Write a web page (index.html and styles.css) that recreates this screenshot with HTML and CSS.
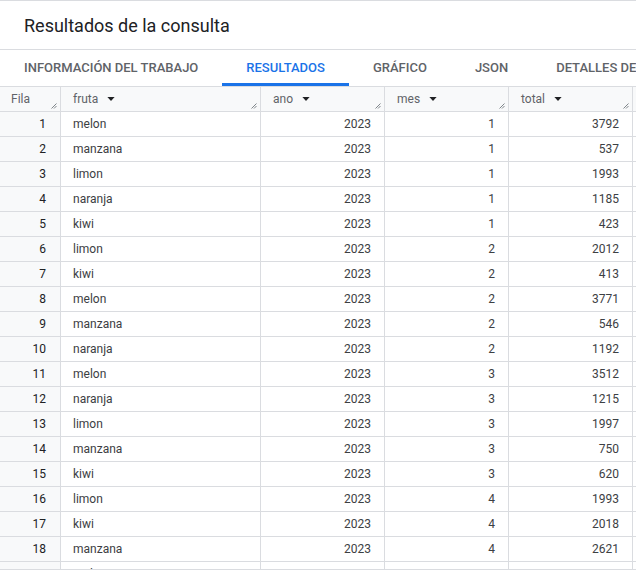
FILE: index.html
```html
<!DOCTYPE html>
<html lang="es">
<head>
<meta charset="utf-8">
<title>Resultados de la consulta</title>
<link rel="stylesheet" href="styles.css">
</head>
<body>
<div class="page">
  <header class="title-bar"><h1 class="title">Resultados de la consulta</h1></header>
  <nav class="tabs">
    <div class="tab">INFORMACIÓN DEL TRABAJO</div>
    <div class="tab active">RESULTADOS</div>
    <div class="tab">GRÁFICO</div>
    <div class="tab">JSON</div>
    <div class="tab">DETALLES DE LA EJECUCIÓN</div>
  </nav>
  <div class="grid-wrap">
    <div class="grid" id="grid">
      <div class="hc rn">Fila<svg class="rz" viewBox="0 0 6 6"><path d="M0.5 5.5 L5.5 0.5 M3 5.5 L5.5 3"/></svg></div>
      <div class="hc">fruta<svg class="sort" viewBox="0 0 9 5"><path d="M0 0 H9 L4.5 5 Z"/></svg><svg class="rz" viewBox="0 0 6 6"><path d="M0.5 5.5 L5.5 0.5 M3 5.5 L5.5 3"/></svg></div>
      <div class="hc">ano<svg class="sort" viewBox="0 0 9 5"><path d="M0 0 H9 L4.5 5 Z"/></svg><svg class="rz" viewBox="0 0 6 6"><path d="M0.5 5.5 L5.5 0.5 M3 5.5 L5.5 3"/></svg></div>
      <div class="hc">mes<svg class="sort" viewBox="0 0 9 5"><path d="M0 0 H9 L4.5 5 Z"/></svg><svg class="rz" viewBox="0 0 6 6"><path d="M0.5 5.5 L5.5 0.5 M3 5.5 L5.5 3"/></svg></div>
      <div class="hc">total<svg class="sort" viewBox="0 0 9 5"><path d="M0 0 H9 L4.5 5 Z"/></svg><svg class="rz" viewBox="0 0 6 6"><path d="M0.5 5.5 L5.5 0.5 M3 5.5 L5.5 3"/></svg></div>
      <div class="hc extra"></div>

      <div class="c rn">1</div><div class="c">melon</div><div class="c num">2023</div><div class="c num">1</div><div class="c num">3792</div><div class="c extra"></div>
      <div class="c rn">2</div><div class="c">manzana</div><div class="c num">2023</div><div class="c num">1</div><div class="c num">537</div><div class="c extra"></div>
      <div class="c rn">3</div><div class="c">limon</div><div class="c num">2023</div><div class="c num">1</div><div class="c num">1993</div><div class="c extra"></div>
      <div class="c rn">4</div><div class="c">naranja</div><div class="c num">2023</div><div class="c num">1</div><div class="c num">1185</div><div class="c extra"></div>
      <div class="c rn">5</div><div class="c">kiwi</div><div class="c num">2023</div><div class="c num">1</div><div class="c num">423</div><div class="c extra"></div>
      <div class="c rn">6</div><div class="c">limon</div><div class="c num">2023</div><div class="c num">2</div><div class="c num">2012</div><div class="c extra"></div>
      <div class="c rn">7</div><div class="c">kiwi</div><div class="c num">2023</div><div class="c num">2</div><div class="c num">413</div><div class="c extra"></div>
      <div class="c rn">8</div><div class="c">melon</div><div class="c num">2023</div><div class="c num">2</div><div class="c num">3771</div><div class="c extra"></div>
      <div class="c rn">9</div><div class="c">manzana</div><div class="c num">2023</div><div class="c num">2</div><div class="c num">546</div><div class="c extra"></div>
      <div class="c rn">10</div><div class="c">naranja</div><div class="c num">2023</div><div class="c num">2</div><div class="c num">1192</div><div class="c extra"></div>
      <div class="c rn">11</div><div class="c">melon</div><div class="c num">2023</div><div class="c num">3</div><div class="c num">3512</div><div class="c extra"></div>
      <div class="c rn">12</div><div class="c">naranja</div><div class="c num">2023</div><div class="c num">3</div><div class="c num">1215</div><div class="c extra"></div>
      <div class="c rn">13</div><div class="c">limon</div><div class="c num">2023</div><div class="c num">3</div><div class="c num">1997</div><div class="c extra"></div>
      <div class="c rn">14</div><div class="c">manzana</div><div class="c num">2023</div><div class="c num">3</div><div class="c num">750</div><div class="c extra"></div>
      <div class="c rn">15</div><div class="c">kiwi</div><div class="c num">2023</div><div class="c num">3</div><div class="c num">620</div><div class="c extra"></div>
      <div class="c rn">16</div><div class="c">limon</div><div class="c num">2023</div><div class="c num">4</div><div class="c num">1993</div><div class="c extra"></div>
      <div class="c rn">17</div><div class="c">kiwi</div><div class="c num">2023</div><div class="c num">4</div><div class="c num">2018</div><div class="c extra"></div>
      <div class="c rn">18</div><div class="c">manzana</div><div class="c num">2023</div><div class="c num">4</div><div class="c num">2621</div><div class="c extra"></div>
      <div class="c rn">19</div><div class="c">melon</div><div class="c num">2023</div><div class="c num">4</div><div class="c num">3711</div><div class="c extra"></div>
    </div>
  </div>
</div>
</body>
</html>
```

FILE: styles.css
```css
* { box-sizing: border-box; }
html, body { margin: 0; padding: 0; background: #fff; }
body {
  font-family: Roboto, "Liberation Sans", Arial, sans-serif;
  color: #202124;
  width: 636px;
  overflow: hidden;
}
.page { width: 636px; }
.title-bar {
  border-top: 1px solid #dadce0;
  border-bottom: 1px solid #dadce0;
  height: 50px;
  display: flex;
  align-items: center;
  padding-left: 24px;
}
.title {
  margin: 0;
  font-size: 18px;
  font-weight: 400;
  color: #202124;
  white-space: nowrap;
}
.tabs {
  display: flex;
  height: 37px;
  border-bottom: 1px solid #dadce0;
  white-space: nowrap;
  overflow: hidden;
}
.tab {
  flex: none;
  padding: 0 24px;
  height: 36px;
  display: flex;
  align-items: center;
  font-size: 13px;
  font-weight: 500;
  letter-spacing: 0;
  color: #5f6368;
  border-bottom: 3px solid transparent;
  padding-top: 1px;
}
.tab.active {
  color: #1a73e8;
  border-bottom-color: #1a73e8;
}
.grid-wrap {
  height: 483px;
  overflow: hidden;
  border-bottom: 1px solid #dadce0;
}
.grid {
  display: grid;
  grid-template-columns: 61px 200px 124px 124px 124px 1fr;
  grid-auto-rows: 25px;
  font-size: 12px;
}
.hc, .c {
  border-right: 1px solid #dadce0;
  border-bottom: 1px solid #dadce0;
  display: flex;
  align-items: center;
  white-space: nowrap;
  overflow: hidden;
}
.hc {
  position: relative;
  background: #f8f9fa;
  color: #5f6368;
  padding-left: 12px;
}
.hc.rn { padding-left: 11px; color: #5f6368; }
.c {
  padding: 0 12px;
  color: #3c4043;
}
.c.rn {
  background: #f8f9fa;
  justify-content: flex-end;
  padding-right: 14px;
  color: #202124;
}
.c.num {
  justify-content: flex-end;
  padding-right: 13px;
}
.extra { border-right: none; padding: 0; }
.sort {
  width: 8px;
  height: 4px;
  margin-left: 9px;
  fill: #202124;
}
.rz {
  position: absolute;
  right: 3px;
  bottom: 2px;
  width: 6px;
  height: 6px;
  stroke: #80868b;
  stroke-width: 1;
  fill: none;
}
```
